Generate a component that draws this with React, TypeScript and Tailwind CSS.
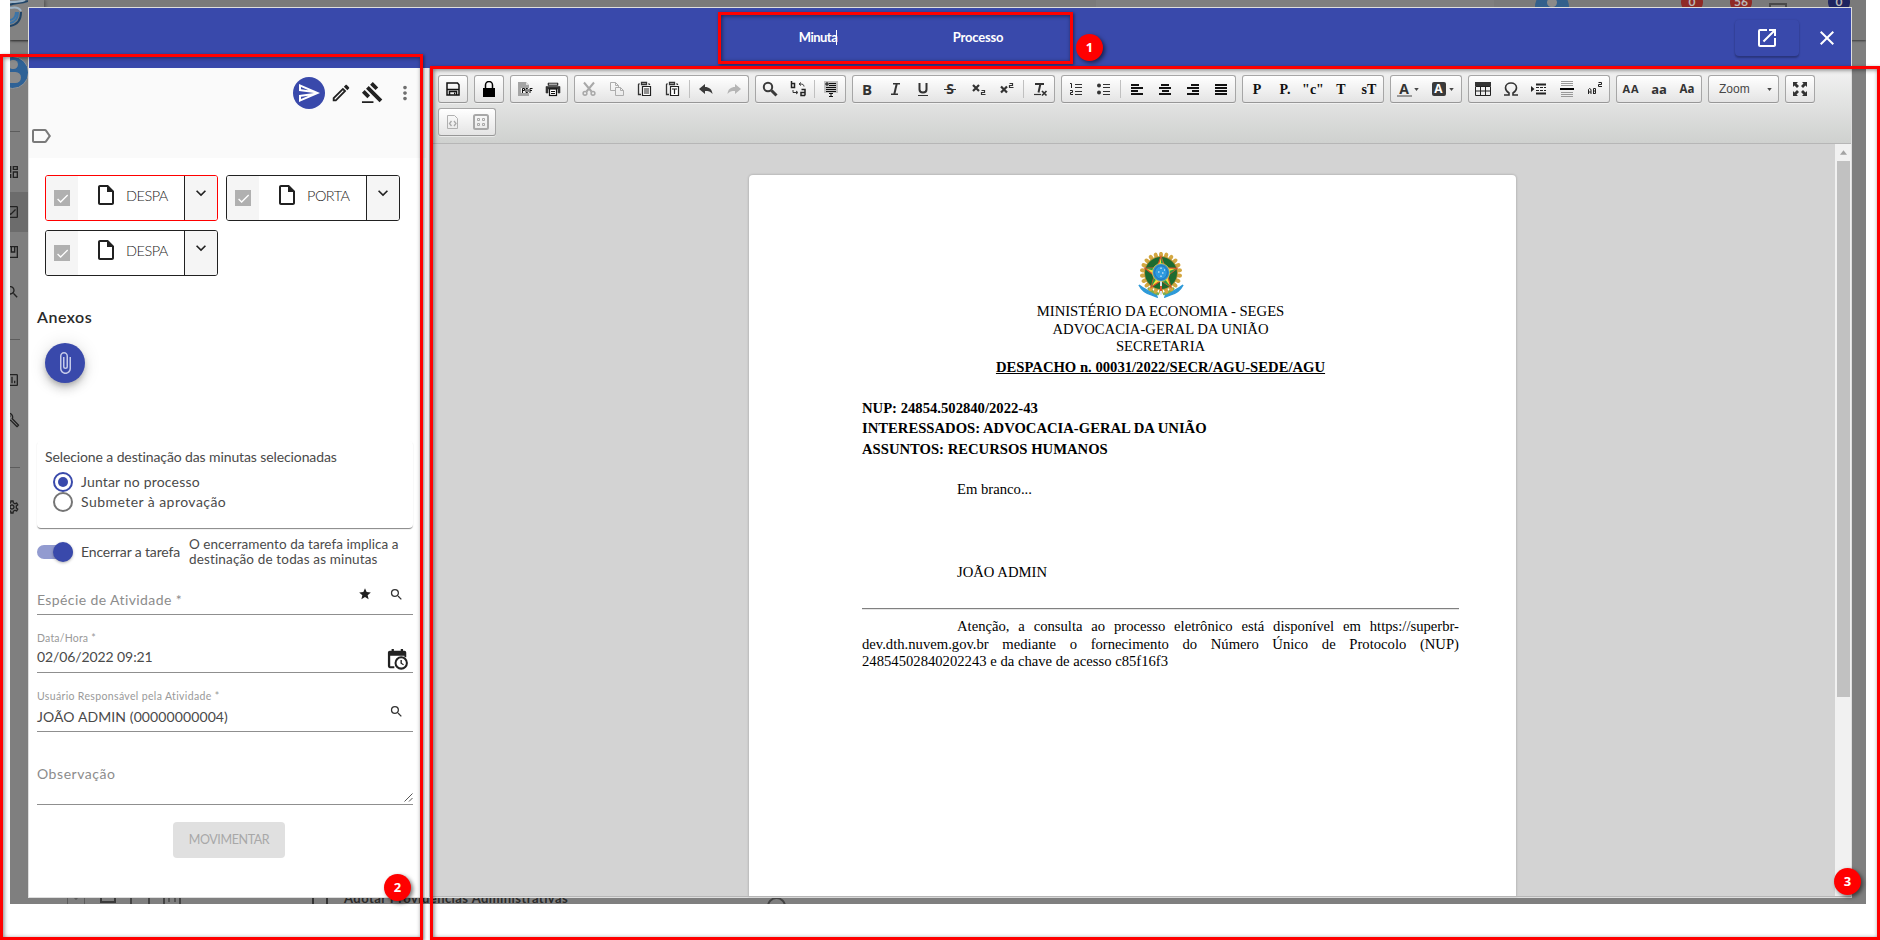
import React from "react";
import {
  MdAttachFile,
  MdCheck,
  MdClose,
  MdExpandMore,
  MdGavel,
  MdMoreVert,
  MdOpenInNew,
  MdOutlineAssessment,
  MdOutlineBuild,
  MdOutlineCheckBox,
  MdOutlineDashboard,
  MdOutlineEdit,
  MdOutlineInsertDriveFile,
  MdOutlineLabel,
  MdOutlineSend,
  MdOutlineSettings,
  MdSearch,
  MdStar,
} from "react-icons/md";

type Kids = { children?: React.ReactNode };

/* ---------- toolbar ---------- */

function Ico({ children, className = "" }: Kids & { className?: string }) {
  return (
    <svg viewBox="0 0 16 16" className={"h-4 w-4 shrink-0 " + className} fill="none" stroke="#333" strokeWidth="1">
      {children}
    </svg>
  );
}

function Btn({ children, wide }: Kids & { wide?: boolean }) {
  return (
    <div className={(wide ? "w-[35px] " : "w-7 ") + "flex h-[26px] shrink-0 items-center justify-center"}>{children}</div>
  );
}

function Group({ children }: Kids) {
  return (
    <div className="flex h-7 shrink-0 items-center rounded-[3px] border border-[#a6a6a6] border-b-[#979797] bg-linear-to-b from-white to-[#e4e4e4] shadow-[0_1px_0_rgba(255,255,255,0.5)]">
      {children}
    </div>
  );
}

const Sep = () => <div className="mx-[2px] h-[18px] w-px shrink-0 bg-[#c0c0c0]" />;

function Glyph({ children, className = "" }: Kids & { className?: string }) {
  return (
    <span className={"mt-px whitespace-nowrap font-['Liberation_Serif',serif] text-[14px] font-bold leading-4 text-[#111] " + className}>
      {children}
    </span>
  );
}

function Sans({ children, className = "" }: Kids & { className?: string }) {
  return (
    <span className={"whitespace-nowrap font-['Open_Sans',sans-serif] font-bold leading-4 text-[#333] " + className}>{children}</span>
  );
}

function Lines({ rows }: { rows: [number, number][] }) {
  return (
    <Ico>
      {rows.map(([x, w], i) => (
        <rect key={i} x={x} y={3 + i * 3} width={w} height="2" fill="#111" stroke="none" />
      ))}
    </Ico>
  );
}

const Caret = () => (
  <svg viewBox="0 0 6 4" className="h-[3px] w-[5px] shrink-0">
    <path d="M0 0h6L3 4z" fill="#474747" />
  </svg>
);

function Toolbar() {
  return (
    <div className="flex h-[75px] flex-col gap-[5px] border-b border-[#b6b6b6] bg-linear-to-b from-[#f2f2f2] to-[#cfd1cf] pl-[8px] pt-[6px]">
      <div className="flex gap-[6px]">
        <Group>
          <Btn>
            <Ico>
              <path d="M2 2h10.500l1.500 1.700V14H2zM2 8.500h12M4.500 14v-3.500h7V14" stroke="#111" strokeWidth="1.500" />
              <path d="M9.500 11.500v2" stroke="#111" />
            </Ico>
          </Btn>
        </Group>
        <Group>
          <Btn>
            <Ico>
              <path d="M4.500 8V4a3.500 3.500 0 0 1 7 0V8" stroke="#000" strokeWidth="1.500" />
              <rect x="2" y="7" width="12" height="9" fill="#000" stroke="none" />
            </Ico>
          </Btn>
        </Group>
        <Group>
          <Btn>
            <Ico>
              <path d="M1 1h8l3 3v3H4v5h8v3H1z" fill="#a5a5a5" stroke="none" />
              <path d="M9 1l3 3H9z" fill="#ddd" stroke="none" />
              <path d="M5.500 12V7.500h2v2h-2M9 7.500h1.500l.5 1v2l-.5 1H9zM13 12V7.500h2.500M13 9.500h2" stroke="#111" />
            </Ico>
          </Btn>
          <Btn>
            <Ico>
              <path d="M3 2h10v2.500H3zM1 5.500h14V12h-2V8H3v4H1z" fill="#333" stroke="#333" strokeWidth=".6" />
              <path d="M4 3.200h8" stroke="#ddd" />
              <rect x="4.500" y="8" width="7" height="6.500" fill="#fff" stroke="#111" strokeWidth="1.200" />
              <path d="M6 10.500h4M6 12.500h4" stroke="#111" />
            </Ico>
          </Btn>
        </Group>
        <Group>
          <Btn>
            <Ico>
              <path d="M3 1.500l7.500 9M13 1.500L5.500 10.500" stroke="#a8a8a8" strokeWidth="2" />
              <circle cx="4" cy="12.300" r="1.900" stroke="#a8a8a8" strokeWidth="1.500" />
              <circle cx="12" cy="12.300" r="1.900" stroke="#a8a8a8" strokeWidth="1.500" />
            </Ico>
          </Btn>
          <Btn>
            <Ico>
              <path d="M6 9.500H1.500v-8h5l3 3V6M6.500 1.500v3h3M6.500 14.500v-8h5l3 3v5zM11.500 6.500v3h3" stroke="#adadad" />
            </Ico>
          </Btn>
          <Btn>
            <Ico>
              <path d="M4 13.500H1.500V3.500L2.500 2.500M11.500 2.500l1 1V4M4.500 1.500h5v2h-5z" stroke="#333" strokeWidth="1.300" />
              <path d="M5.500 5.500h8v9h-8z" fill="#fff" stroke="#222" strokeWidth="1.200" />
              <path d="M7 8h5M7 10h5M7 12h5" stroke="#222" strokeWidth="1.200" />
            </Ico>
          </Btn>
          <Btn>
            <Ico>
              <path d="M4 13.500H1.500V3.500L2.500 2.500M11.500 2.500l1 1V4M4.500 1.500h5v2h-5z" stroke="#333" strokeWidth="1.300" />
              <path d="M5.500 5.500h8v9h-8z" fill="#fff" stroke="#222" strokeWidth="1.200" />
              <path d="M7 8h5M9.500 8v5" stroke="#222" strokeWidth="1.200" />
            </Ico>
          </Btn>
          <Sep />
          <Btn>
            <Ico>
              <path d="M1 8l6-5v3c4 0 7 2 7.500 7C12.500 10.500 10.500 10 7 10v3z" fill="#3a3a3a" stroke="none" />
            </Ico>
          </Btn>
          <Btn>
            <Ico>
              <path d="M15 8L9 3v3c-4 0-7 2-7.500 7C3.500 10.500 5.500 10 9 10v3z" fill="#b5b5b5" stroke="none" />
            </Ico>
          </Btn>
        </Group>
        <Group>
          <Btn>
            <Ico>
              <circle cx="6" cy="6" r="4.200" stroke="#3a3a3a" strokeWidth="2" />
              <path d="M9.500 9.500l5 5" stroke="#3a3a3a" strokeWidth="3" />
            </Ico>
          </Btn>
          <Btn>
            <Ico>
              <path d="M1.500 0v6.500h3v-4h-3M15 14.500v-6h-3.500M15 14.500h-4v-3h4" stroke="#222" strokeWidth="1.500" />
              <path d="M14 5.500c0-2-1.500-2.500-4-2.500M11 1.500L9 3l2 1.500M3 9v2.500h4M6 10l2 1.500L6 13" stroke="#333" />
            </Ico>
          </Btn>
          <Sep />
          <Btn>
            <Ico>
              <rect x="1" y="0" width="14" height="12" fill="#c2c2c2" stroke="none" />
              <path d="M3 2h2v2H3zM6 2.500h7M6 4.500h7M3 6.500h10M3 8.500h10M3 10.500h10" stroke="#111" />
              <path d="M6 12.500h4M8 12v3.500M6 15.500h4" stroke="#111" />
            </Ico>
          </Btn>
        </Group>
        <Group>
          <Btn><Sans className="text-[15px]">B</Sans></Btn>
          <Btn>
            <Ico>
              <path d="M6 2.700h7M4 13.300h7" stroke="#333" strokeWidth="1.500" />
              <path d="M9.700 3L7.300 13" stroke="#333" strokeWidth="2" />
            </Ico>
          </Btn>
          <Btn>
            <Ico>
              <path d="M4.500 2v6.500c0 4 7 4 7 0V2" stroke="#333" strokeWidth="2" />
              <path d="M3 14.500h10" stroke="#333" />
            </Ico>
          </Btn>
          <Btn>
            <span className="flex items-center">
              <Sans className="text-[14px]">S</Sans>
              <span className="-ml-[10px] h-px w-3 bg-[#333]" />
            </span>
          </Btn>
          <Btn>
            <Ico>
              <path d="M2 4l6 6M8 4l-6 6" stroke="#333" strokeWidth="2.200" />
              <path d="M10.500 9.500h3v2h-3v2h4" stroke="#333" strokeWidth="1.200" />
            </Ico>
          </Btn>
          <Btn>
            <Ico>
              <path d="M2 5.500l6 6M8 5.500l-6 6" stroke="#333" strokeWidth="2.200" />
              <path d="M10.500 2.500h3v2h-3v2h4" stroke="#333" strokeWidth="1.200" />
            </Ico>
          </Btn>
          <Sep />
          <Btn>
            <Ico>
              <path d="M3 3h9M8.500 2.500l-2 9" stroke="#333" strokeWidth="2" />
              <path d="M2 13.500h7" stroke="#333" strokeWidth="1.200" />
              <path d="M10 10l4.500 4.500M14.500 10L10 14.500" stroke="#333" strokeWidth="1.700" />
            </Ico>
          </Btn>
        </Group>
        <Group>
          <Btn>
            <Ico>
              <path d="M7 3.500h7M7 6.500h7M7 10.500h7M7 13.500h7" stroke="#333" />
              <path d="M2 2.500h1.500V7M2 9.500h2.500v2H2.500v2h2.500" stroke="#222" />
            </Ico>
          </Btn>
          <Btn>
            <Ico>
              <circle cx="3" cy="4.500" r="2" fill="#333" stroke="none" />
              <circle cx="3" cy="11.500" r="2" fill="#333" stroke="none" />
              <path d="M7 3.500h7M7 6.500h7M7 10.500h7M7 13.500h7" stroke="#333" />
            </Ico>
          </Btn>
          <Sep />
          <Btn><Lines rows={[[2, 8], [2, 12], [2, 7], [2, 12]]} /></Btn>
          <Btn><Lines rows={[[4, 8], [2, 12], [5, 7], [2, 12]]} /></Btn>
          <Btn><Lines rows={[[6, 8], [2, 12], [7, 7], [2, 12]]} /></Btn>
          <Btn><Lines rows={[[2, 12], [2, 12], [2, 12], [2, 12]]} /></Btn>
        </Group>
        <Group>
          <Btn><Glyph>P</Glyph></Btn>
          <Btn><Glyph>P.</Glyph></Btn>
          <Btn><Glyph>"c"</Glyph></Btn>
          <Btn><Glyph className="text-[13px]">T</Glyph></Btn>
          <Btn><Glyph>sT</Glyph></Btn>
        </Group>
        <Group>
          <Btn wide>
            <span className="-ml-[2px] flex items-center gap-[2px]">
              <span className="flex flex-col items-center">
                <Sans className="text-[14px] leading-[13px]">A</Sans>
                <span className="h-[2px] w-[15px] bg-[#999]" />
              </span>
              <Caret />
            </span>
          </Btn>
          <Btn wide>
            <span className="-ml-[2px] flex items-center gap-[3px]">
              <span className="flex h-[14px] w-[14px] items-center justify-center rounded-[2px] bg-[#3a3a3a]">
                <span className="font-['Open_Sans',sans-serif] text-[12px] font-bold leading-3 text-white">A</span>
              </span>
              <Caret />
            </span>
          </Btn>
        </Group>
        <Group>
          <Btn>
            <Ico>
              <path d="M.5 5.500h15v9H.5zM0 10h16M5.500 5v9M10.500 5v9" stroke="#222" />
              <rect x="0" y="1" width="16" height="4" fill="#333" stroke="none" />
            </Ico>
          </Btn>
          <Btn>
            <Ico>
              <path d="M1 14h5v-2C3.500 10.500 2.500 9 2.500 6.800 2.500 3.800 5 2 8 2s5.500 1.800 5.500 4.800C13.500 9 12.500 10.500 10 12v2h5" stroke="#333" strokeWidth="1.600" />
            </Ico>
          </Btn>
          <Btn>
            <Ico>
              <path d="M5 3.500h10M5 12.500h10" stroke="#222" strokeWidth="2" />
              <path d="M5 6.500h3m1 0h3m1 0h2M5 9.500h3m1 0h3m1 0h2" stroke="#222" />
              <path d="M0 5l3.500 3L0 11z" fill="#222" stroke="none" />
            </Ico>
          </Btn>
          <Btn>
            <Ico>
              <path d="M2 .5h12M2 2.500h12M2 4.500h12M2 11.500h12M2 13.500h12M2 15.500h12" stroke="#999" />
              <path d="M1 8h14" stroke="#000" strokeWidth="2" />
            </Ico>
          </Btn>
          <Btn>
            <Ico>
              <path d="M1.500 13V8.500l1-1 1.500 1V13M1.500 11H4M6.500 13V7.500h2v5h-2M6.500 10h2" stroke="#222" />
              <path d="M11.500 1.500h3v2h-3v2h3.500" stroke="#222" />
            </Ico>
          </Btn>
        </Group>
        <Group>
          <Btn><Sans className="text-[11px] tracking-[0.8px]">AA</Sans></Btn>
          <Btn><Sans className="text-[13px]">aa</Sans></Btn>
          <Btn><Sans className="text-[11.500px]">Aa</Sans></Btn>
        </Group>
        <Group>
          <div className="flex w-[69px] items-center justify-between pl-[10px] pr-[6px]">
            <span className="font-['Liberation_Sans',sans-serif] text-[12px] leading-4 text-[#474747]">Zoom</span>
            <Caret />
          </div>
        </Group>
        <Group>
          <Btn>
            <Ico>
              <path d="M1 1h5L4.500 2.500 7 5 5 7 2.500 4.500 1 6zM15 1v5l-1.500-1.500L11 7 9 5l2.500-2.500L10 1zM1 15v-5l1.500 1.500L5 9l2 2-2.500 2.500L6 15zM15 15h-5l1.500-1.500L9 11l2-2 2.500 2.500L15 10z" fill="#333" stroke="none" />
            </Ico>
          </Btn>
        </Group>
      </div>
      <div className="flex">
        <Group>
          <Btn>
            <Ico>
              <path d="M2.500 1.500h7l3 3v10h-10z" stroke="#b0b0b0" />
              <path d="M6.500 7L4.500 9.500l2 2.500M9 7l2 2.500L9 12" stroke="#a8a8a8" strokeWidth="1.300" />
            </Ico>
          </Btn>
          <Btn>
            <Ico>
              <rect x="1" y="1" width="14" height="14" rx="1.500" stroke="#a8a8a8" strokeWidth="2" />
              <path d="M4.500 4.500h2v2h-2zM9.500 4.500h2v2h-2zM4.500 9.500h2v2h-2zM9.500 9.500h2v2h-2z" stroke="#a8a8a8" />
            </Ico>
          </Btn>
        </Group>
      </div>
    </div>
  );
}

/* ---------- document ---------- */

function Crest() {
  const leaves = Array.from({ length: 22 }, (_, i) => (i * 360) / 22);
  return (
    <svg viewBox="0 0 46 46" className="h-[46px] w-[46px]">
      <path d="M1 33c3 6 8 9 13 10l5 2-1-4C11 40 6 37 1 33zM45 33c-3 6-8 9-13 10l-5 2 1-4c7-1 12-4 17-8z" fill="#2f9ad8" stroke="#2f9ad8" strokeWidth="1.500" />
      <path d="M10 36c3 3 6 5 11 6M36 36c-3 3-6 5-11 6" stroke="#7fae4a" strokeWidth="2.500" fill="none" />
      {leaves.map((a) => (
        <ellipse key={a} cx="23" cy="2.800" rx="2" ry="3" fill="#d3a741" transform={`rotate(${a} 23 21)`} />
      ))}
      <circle cx="23" cy="21" r="17" fill="#b9973a" />
      <circle cx="23" cy="21" r="16" fill="#1c6b30" />
      <path d="M23 4.500l4 11.300 12 .4-9.400 7.300 3.200 11.600L23 28.400l-9.800 6.700 3.200-11.600L7 16.200l12-.4z" fill="#f6e03a" stroke="#d8502a" strokeWidth="1.200" />
      <path d="M23 5v14l3.600-3.300zM38.500 16.400L25 21l4.600 2.600zM32.600 34.700L24 23l-1 5.400zM13.400 34.700L21 23l-4.600.6zM7.500 16.400L21 20l-2-4.200z" fill="#2c9a44" />
      <ellipse cx="23" cy="20.500" rx="8.600" ry="9" fill="#2b8fd0" stroke="#e8cf4c" strokeWidth=".8" />
      <ellipse cx="23" cy="20.500" rx="6.300" ry="6.700" fill="#2f9be0" stroke="#1d5fa4" strokeWidth=".6" />
      <path d="M23 15.500v1.500M20 20h1.500M24 21h1.500M23 23.500v1.500M26 18h1" stroke="#fff" strokeWidth="1" />
      <path d="M23 29.500v13" stroke="#d8e6ef" strokeWidth="2" />
      <path d="M22 34h2v5h-2z" fill="#d5542c" />
    </svg>
  );
}

function Document() {
  return (
    <div className="flex h-[752px] bg-[#d3d3d3]">
      <div className="flex flex-1 pl-[319px] pt-[31px]">
        <article className="flex w-[767px] flex-col rounded-t-[4px] bg-white pl-[113px] pr-[57px] pt-[76px] font-['Liberation_Serif',serif] text-[14.667px] leading-[17.500px] text-black shadow-[0_0_2px_1px_rgba(0,0,0,0.12)]">
          <div className="flex h-[52px] justify-center pt-px"><Crest /></div>
          <p className="text-center">MINISTÉRIO DA ECONOMIA - SEGES</p>
          <p className="text-center">ADVOCACIA-GERAL DA UNIÃO</p>
          <p className="text-center">SECRETARIA</p>
          <p className="mt-[3px] text-center font-bold underline">DESPACHO n. 00031/2022/SECR/AGU-SEDE/AGU</p>
          <div className="mt-[22px] font-bold leading-[20.300px]">
            <p>NUP: 24854.502840/2022-43</p>
            <p>INTERESSADOS: ADVOCACIA-GERAL DA UNIÃO</p>
            <p>ASSUNTOS: RECURSOS HUMANOS</p>
          </div>
          <p className="mt-[22.600px] pl-[95px]">Em branco...</p>
          <p className="mt-[65px] pl-[95px]">JOÃO ADMIN</p>
          <div className="mt-[27px] h-[2px] border-t border-[#808080] bg-[#e6e6e6]" />
          <p className="mt-[8px] text-justify indent-[95px]">
            Atenção, a consulta ao processo eletrônico está disponível em https://superbr-
            <wbr />
            dev.dth.nuvem.gov.br mediante o fornecimento do Número Único de Protocolo (NUP) 24854502840202243 e da chave de acesso c85f16f3
          </p>
        </article>
      </div>
      <div className="flex w-[16px] flex-col items-center bg-[#f1f1f1]">
        <div className="flex h-[17px] items-center">
          <svg viewBox="0 0 8 5" className="h-[5px] w-[7px]"><path d="M4 0l4 5H0z" fill="#a3a3a3" /></svg>
        </div>
        <div className="h-[536px] w-[13px] bg-[#c1c1c1]" />
      </div>
    </div>
  );
}

/* ---------- task panel ---------- */

function Chip({ label, active, wide }: { label: string; active?: boolean; wide?: boolean }) {
  const edge = active ? "border-[#ff0000]" : "border-[#212121]";
  return (
    <div className={"flex h-[46px] rounded-[3px] border " + edge + (wide ? " w-[174px]" : " w-[173px]")}>
      <div className="flex w-8 items-center justify-center rounded-l-[2px] bg-[#f5f5f5]">
        <div className="flex h-4 w-4 items-center justify-center bg-[#b0b0b0]">
          <MdCheck className="h-[15px] w-[15px] text-white" />
        </div>
      </div>
      <div className="flex flex-1 items-start pl-4 pt-[7px]">
        <MdOutlineInsertDriveFile className="h-6 w-6 text-[#212121]" />
        <span className="ml-2 mt-[3px] text-[14.500px] font-light leading-5 tracking-[-0.500px] text-[#1c1c1c]">{label}</span>
      </div>
      <div className="flex w-[33px] justify-center rounded-r-[2px] border-l border-[#212121] bg-[#f5f5f5] pr-px pt-[7px]">
        <MdExpandMore className="h-5 w-5 text-[#212121]" />
      </div>
    </div>
  );
}

const CalendarClock = () => (
  <svg viewBox="0 0 24 24" className="h-[22px] w-[22px] shrink-0" fill="#212121">
    <path d="M5 1h2.500v2H15V1h2.500v2H19a2 2 0 0 1 2 2v5h-2V8.500H3.500V20H8v2H3a2 2 0 0 1-2-2V5a2 2 0 0 1 2-2h2z" />
    <path d="M15.500 9a7.300 7.300 0 1 0 0 14.600 7.300 7.300 0 0 0 0-14.600zm0 2.200a5.100 5.100 0 1 1 0 10.200 5.100 5.100 0 0 1 0-10.200zM14.700 13v4l3 1.800.7-1.200-2.200-1.300V13z" />
  </svg>
);

function Panel() {
  return (
    <aside className="flex w-[397px] flex-col bg-white font-['Lato',sans-serif] text-[#4a4a4a]">
      <div className="flex h-[90px] flex-col bg-[#fafafa]">
        <div className="flex h-[49px] items-center justify-end pr-[10px]">
          <div className="flex h-8 w-8 items-center justify-center rounded-full bg-[#3949ab]">
            <MdOutlineSend className="h-6 w-6 text-white" />
          </div>
          <MdOutlineEdit className="ml-[5px] h-[22px] w-[22px] text-[#212121]" />
          <MdGavel className="ml-[9px] h-[23px] w-[23px] text-[#212121]" />
          <MdMoreVert className="ml-[10px] h-[22px] w-[22px] text-[#6f6f6f]" />
        </div>
        <MdOutlineLabel className="mt-[7px] h-6 w-6 text-[#7a7a7a]" />
      </div>

      <div className="mt-[17px] flex h-[101px] flex-wrap content-start gap-x-2 gap-y-[9px] pl-4">
        <Chip label="DESPA" active />
        <Chip label="PORTA" wide />
        <Chip label="DESPA" />
      </div>

      <h2 className="ml-2 mt-[31px] text-[16px] font-semibold leading-5 tracking-[0.500px] text-[#2a2a2a]">Anexos</h2>
      <div className="ml-4 mt-[16px] flex h-10 w-10 items-center justify-center rounded-full bg-[#3949ab] shadow-[0_3px_5px_-1px_rgba(0,0,0,0.2),0_6px_10px_rgba(0,0,0,0.14),0_1px_18px_rgba(0,0,0,0.12)]">
        <MdAttachFile className="h-6 w-6 text-[#c5cae9]" />
      </div>

      <div className="ml-2 mt-[58px] h-[87px] w-[376px] rounded-[4px] px-2 pt-[7px] text-[14px] shadow-[0_2px_1px_-1px_rgba(0,0,0,0.3),0_1px_1px_rgba(0,0,0,0.25)]">
        <p className="whitespace-nowrap leading-[18px] tracking-[-0.110px]">Selecione a destinação das minutas selecionadas</p>
        <div className="mt-[6px] flex items-center pl-2">
          <div className="flex h-5 w-5 items-center justify-center rounded-full border-2 border-[#3949ab]">
            <div className="h-[10px] w-[10px] rounded-full bg-[#3949ab]" />
          </div>
          <span className="ml-[8px] leading-5 tracking-[0.180px]">Juntar no processo</span>
        </div>
        <div className="flex items-center pl-2">
          <div className="h-5 w-5 rounded-full border-2 border-[#757575]" />
          <span className="ml-[8px] leading-5 tracking-[0.450px]">Submeter à aprovação</span>
        </div>
      </div>

      <div className="ml-2 mt-2 flex h-[31px] items-center text-[14px]">
        <div className="flex h-[14px] w-9 items-center justify-end rounded-full bg-[#929bd0]">
          <div className="h-5 w-5 shrink-0 rounded-full bg-[#3949ab] shadow-[0_1px_3px_rgba(0,0,0,0.3)]" />
        </div>
        <span className="ml-[8px] w-[108px] whitespace-nowrap leading-5 tracking-[-0.150px]">Encerrar a tarefa</span>
        <p className="whitespace-nowrap text-[13.500px] leading-[15px] tracking-[0.050px]">
          O encerramento da tarefa implica a
          <br />
          <span className="tracking-[0.150px]">destinação de todas as minutas</span>
        </p>
      </div>

      <div className="ml-2 mt-[20px] flex h-[28px] w-[376px] items-start border-b border-[#8f8f8f]">
        <span className="mt-[3px] flex-1 text-[14px] leading-5 tracking-[0.400px] text-[#8c8c8c]">Espécie de Atividade *</span>
        <MdStar className="h-[14px] w-[14px] text-[#212121]" />
        <MdSearch className="ml-[17px] mr-[9px] h-[15px] w-[15px] text-[#333]" />
      </div>

      <div className="ml-2 mt-[16px] flex h-[42px] w-[376px] border-b border-[#8f8f8f]">
        <div className="flex-1">
          <p className="text-[10.500px] leading-[15px] tracking-[0.200px] text-[#999]">Data/Hora *</p>
          <p className="mt-px text-[14px] leading-5 tracking-[-0.100px]">02/06/2022 09:21</p>
        </div>
        <div className="mr-[4px] mt-[17px]"><CalendarClock /></div>
      </div>

      <div className="ml-2 mt-[16px] flex h-[43px] w-[376px] border-b border-[#8f8f8f]">
        <div className="flex-1">
          <p className="text-[10.500px] leading-[15px] tracking-[0.350px] text-[#999]">Usuário Responsável pela Atividade *</p>
          <p className="mt-[3px] text-[14px] leading-5 tracking-[0.100px]">JOÃO ADMIN (00000000004)</p>
        </div>
        <MdSearch className="mr-[9px] mt-[15px] h-[15px] w-[15px] text-[#333]" />
      </div>

      <div className="ml-2 mt-[32px] flex h-[41px] w-[376px] items-start justify-between border-b border-[#8f8f8f]">
        <span className="text-[14px] leading-5 tracking-[0.550px] text-[#8c8c8c]">Observação</span>
        <svg viewBox="0 0 9 9" className="mt-[29px] h-[9px] w-[9px]" stroke="#555" strokeWidth="1">
          <path d="M.5 8.500l8-8M5 8.500l3.500-3.500" />
        </svg>
      </div>

      <div className="ml-[144px] mt-[17px] flex h-9 w-[112px] items-center justify-center rounded-[4px] bg-[#e0e0e0] text-[12.500px] leading-5 tracking-[-0.400px] text-[#a8a8a8]">
        MOVIMENTAR
      </div>
    </aside>
  );
}

/* ---------- dimmed page behind the dialog ---------- */

function RailIcon({ children, active }: Kids & { active?: boolean }) {
  return (
    <div className={"flex h-10 w-[34px] shrink-0 items-center " + (active ? "bg-[#6c6c6c]" : "")}>
      <span className="-ml-[6px] block text-[16px] text-[#222]">{children}</span>
    </div>
  );
}

function TopBadge({ children, className }: Kids & { className: string }) {
  return (
    <span className={"flex h-[22px] w-[22px] items-center justify-center rounded-full font-['Lato',sans-serif] text-[12px] font-bold leading-none text-[#b8b8b8] " + className}>
      {children}
    </span>
  );
}

function Backdrop() {
  return (
    <div className="relative ml-[10px] h-[904px] w-[1856px] overflow-hidden bg-[#7f7f7f]">
      <div className="flex h-10 bg-[#7a7a7a] shadow-[0_1px_2px_rgba(0,0,0,0.55)]">
        <div className="h-10 w-[34px] bg-[#828282] shadow-[1px_0_4px_rgba(0,0,0,0.4)]">
          <svg viewBox="0 0 18 40" className="h-10 w-[18px]" fill="none" strokeWidth="2">
            <path d="M0 5c5-3 10-1 18-4M0 26c6-1 11-5 11-14" stroke="#1f4468" />
            <path d="M0 23c5-1 8-5 8-11M0 20c3 0 6-3 6-8" stroke="#3b74a8" />
            <path d="M0 2c6 0 10 0 15-2M0 8c4-1 9-1 11 3" stroke="#9fb4c6" />
          </svg>
        </div>
        <div className="ml-[1052px] h-[7px] w-[398px] bg-[#7f7f7f]" />
        <div className="-mt-[10px] ml-[41px] h-[34px] w-[34px] rounded-full bg-[#33608c]">
          <div className="mx-auto mt-[8px] h-[9px] w-[10px] rounded-full bg-[#8a8a8a]" />
        </div>
        <div className="-mt-[9px] ml-[112px] flex w-[169px] items-start">
          <TopBadge className="bg-[#8f2a26]">0</TopBadge>
          <TopBadge className="ml-[27px] bg-[#8f2a26]">56</TopBadge>
          <span className="ml-[17px] mt-[12px] h-4 w-[18px] border-2 border-[#4a4a4a]" />
          <TopBadge className="ml-[41px] bg-[#1f2560]">0</TopBadge>
        </div>
      </div>
      <div className="flex w-[34px] flex-col">
        <div className="-ml-[14px] mt-[16px] flex h-[33px] w-[33px] flex-col items-center gap-[3px] rounded-full border border-[#949494] bg-[#2f6296] pt-[3px]">
          <div className="h-[9px] w-[10px] rounded-full bg-[#8b8b8b]" />
          <div className="h-[11px] w-[17px] rounded-[6px] bg-[#8b8b8b]" />
        </div>
        <div className="mb-[20px] mt-[42px] h-px w-[10px] bg-[#5c5c5c]" />
        <RailIcon><MdOutlineDashboard /></RailIcon>
        <RailIcon active><MdOutlineCheckBox /></RailIcon>
        <RailIcon>
          <svg viewBox="0 0 24 24" className="h-4 w-4" fill="none" stroke="#222" strokeWidth="2">
            <path d="M4 4h16v16H4zM11 4v8h5V4" />
          </svg>
        </RailIcon>
        <RailIcon><MdSearch /></RailIcon>
        <div className="mb-[20px] mt-[27px] h-px w-[10px] bg-[#5c5c5c]" />
        <RailIcon><MdOutlineAssessment /></RailIcon>
        <RailIcon><MdOutlineBuild /></RailIcon>
        <div className="mb-[19px] mt-[27px] h-px w-[10px] bg-[#5c5c5c]" />
        <RailIcon><MdOutlineSettings /></RailIcon>
      </div>
      <div className="absolute bottom-0 left-[34px] flex h-[17px] items-start text-[#2a2a2a]">
        <span className="ml-[23px] flex h-[17px] w-[18px] items-end justify-center border-x border-[#5c5c5c]">
          <MdExpandMore className="h-3 w-3 text-[#555]" />
        </span>
        <span className="ml-[15px] h-[16px] w-[16px] border-2 border-[#3a3a3a]" />
        <span className="ml-[14px] h-[17px] w-[20px] border-x-2 border-[#444]" />
        <span className="ml-[13px] flex h-[17px] w-[18px] justify-evenly border-x-2 border-[#444]">
          <i className="h-[15px] w-[2px] bg-[#555]" />
          <i className="h-[15px] w-[2px] bg-[#555]" />
        </span>
        <span className="ml-[131px] h-[17px] w-[16px] border-x-2 border-[#333]" />
        <span className="ml-[16px] w-[225px] whitespace-nowrap font-['Lato',sans-serif] text-[13px] font-bold leading-[22px] tracking-[0.430px]">
          Adotar Providências Administrativas
        </span>
        <span className="ml-[198px] mt-[10px] h-[19px] w-[19px] rounded-full border-2 border-[#444]" />
      </div>
    </div>
  );
}

/* ---------- annotations ---------- */

function Frame({ className }: { className: string }) {
  return (
    <div
      className={
        "pointer-events-none absolute border-[3px] border-[#ff0000] shadow-[1px_1px_3px_rgba(0,0,0,0.5),inset_1px_1px_4px_rgba(0,0,0,0.5)] " +
        className
      }
    />
  );
}

function Marker({ children, className }: Kids & { className: string }) {
  return (
    <div
      className={
        "absolute flex h-[27px] w-[27px] items-center justify-center rounded-full bg-[#ff0000] font-['Noto_Sans',sans-serif] text-[13px] font-bold leading-none text-white shadow-[2px_2px_4px_rgba(0,0,0,0.55)] " +
        className
      }
    >
      {children}
    </div>
  );
}

export default function App() {
  return (
    <main className="relative h-[940px] w-[1880px] overflow-hidden bg-white">
      <Backdrop />

      <section className="absolute left-[28px] top-[7px] flex h-[891px] w-[1824px] flex-col border border-[#dedede] bg-[#ededed]">
        <header className="flex h-[60px] shrink-0 bg-[#3949ab] font-['Lato',sans-serif] text-[13px] font-bold text-white">
          <nav className="ml-[709px] flex">
            <div className="flex w-40 items-center justify-center border-b-2 border-[#303a5e]">
              <span className="leading-[15px] tracking-[-0.500px]">Minuta</span>
              <span className="-ml-px h-[15px] w-px bg-white" />
            </div>
            <div className="flex w-40 items-center justify-center border-b-2 border-transparent leading-[15px] tracking-[-0.200px]">Processo</div>
          </nav>
          <div className="ml-auto flex items-center">
            <div className="flex h-9 w-16 items-center justify-center rounded-[4px] shadow-[0_2px_2px_rgba(0,0,0,0.25),0_0_2px_rgba(0,0,0,0.12)]">
              <MdOpenInNew className="h-[24px] w-[24px]" />
            </div>
            <MdClose className="ml-[16px] mr-[12px] h-6 w-6" />
          </div>
        </header>
        <div className="flex flex-1">
          <Panel />
          <div className="ml-[3px] flex flex-1 flex-col border-l border-[#b6b6b6]">
            <div className="mt-px">
              <Toolbar />
            </div>
            <Document />
            <div className="h-px bg-[#b6b6b6]" />
          </div>
        </div>
      </section>

      <Frame className="left-[718px] top-[12px] h-[52px] w-[355px]" />
      <Frame className="left-0 top-[54px] h-[886px] w-[423px]" />
      <Frame className="left-[430px] top-[66px] h-[874px] w-[1450px]" />
      <Marker className="left-[1076px] top-[34px]">1</Marker>
      <Marker className="left-[384px] top-[874px]">2</Marker>
      <Marker className="left-[1834px] top-[868px]">3</Marker>
    </main>
  );
}
